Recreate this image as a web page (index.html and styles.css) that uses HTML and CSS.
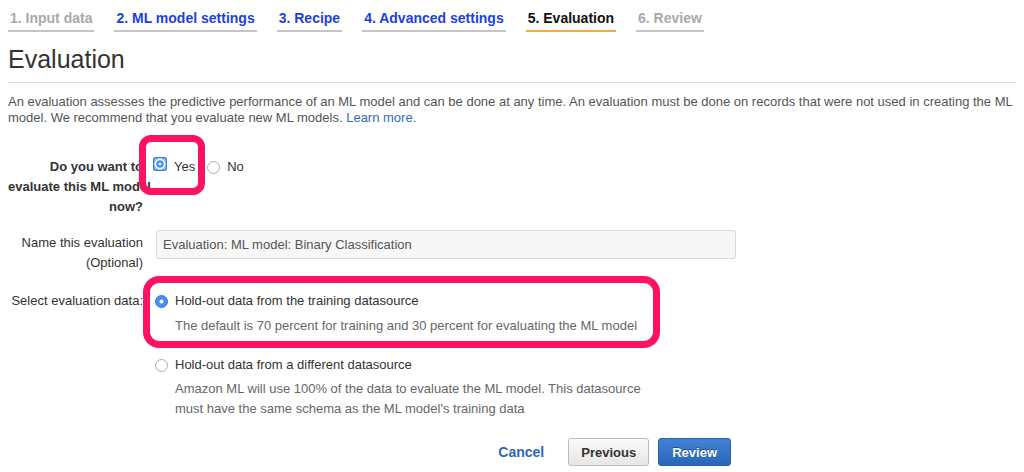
FILE: index.html
```html
<!DOCTYPE html>
<html lang="en">
<head>
<meta charset="utf-8">
<title>Evaluation</title>
<link rel="stylesheet" href="styles.css">
</head>
<body>
<div class="page">
  <nav class="steps">
    <span class="step step-muted">1. Input data</span>
    <span class="step step-link">2. ML model settings</span>
    <span class="step step-link">3. Recipe</span>
    <span class="step step-link">4. Advanced settings</span>
    <span class="step step-active">5. Evaluation</span>
    <span class="step step-muted">6. Review</span>
  </nav>

  <h1 class="title">Evaluation</h1>
  <div class="rule"></div>

  <p class="intro">An evaluation assesses the predictive performance of an ML model and can be done at any time. An evaluation must be done on records that were not used in creating the ML model. We recommend that you evaluate new ML models. <a class="link" href="#">Learn more.</a></p>

  <div class="form">
    <div class="row row-first">
      <div class="label label-bold">Do you want to<br>evaluate this ML model<br>now?</div>
      <div class="control">
        <div class="inline-radios">
          <span class="choice">
            <svg class="radio radio-focus" width="14" height="14" viewBox="0 0 14 14"><rect x="0.5" y="0.5" width="13" height="13" rx="1.5" fill="#78aef0" stroke="#3f80d8"/><circle cx="7" cy="7" r="4.6" fill="#4a8fe6" stroke="#ffffff" stroke-width="1.6"/><circle cx="7" cy="7" r="1.6" fill="#d9e9fb"/></svg>
            <span class="choice-text">Yes</span>
          </span>
          <span class="choice">
            <svg class="radio" width="13" height="13" viewBox="0 0 13 13"><circle cx="6.5" cy="6.5" r="6" fill="#ffffff" stroke="#ababab"/></svg>
            <span class="choice-text">No</span>
          </span>
        </div>
      </div>
    </div>

    <div class="row row-name">
      <div class="label label-padded">Name this evaluation<br>(Optional)</div>
      <div class="control">
        <input class="text-input" type="text" value="Evaluation: ML model: Binary Classification">
      </div>
    </div>

    <div class="row row-data">
      <div class="label">Select evaluation data:</div>
      <div class="control">
        <div class="option">
          <svg class="radio option-radio" width="13" height="13" viewBox="0 0 13 13"><circle cx="6.5" cy="6.5" r="6" fill="#4891f1" stroke="#3479dc"/><circle cx="6.5" cy="6.5" r="2" fill="#ffffff"/></svg>
          <div class="option-body">
            <div class="option-title">Hold-out data from the training datasource</div>
            <div class="option-desc">The default is 70 percent for training and 30 percent for evaluating the ML model</div>
          </div>
        </div>
        <div class="option option-second">
          <svg class="radio option-radio" width="13" height="13" viewBox="0 0 13 13"><circle cx="6.5" cy="6.5" r="6" fill="#ffffff" stroke="#ababab"/></svg>
          <div class="option-body">
            <div class="option-title">Hold-out data from a different datasource</div>
            <div class="option-desc option-desc-tight">Amazon ML will use 100% of the data to evaluate the ML model. This datasource must have the same schema as the ML model's training data</div>
          </div>
        </div>
      </div>
    </div>

    <div class="row row-actions">
      <div class="label"></div>
      <div class="control actions">
        <a class="cancel" href="#">Cancel</a>
        <button class="btn btn-secondary" type="button">Previous</button>
        <button class="btn btn-primary" type="button">Review</button>
      </div>
    </div>
  </div>

  <div class="annot annot-yes"></div>
  <div class="annot annot-data"></div>
</div>
</body>
</html>
```

FILE: styles.css
```css
html, body {
  margin: 0;
  padding: 0;
  background: #ffffff;
}

body {
  font-family: "Liberation Sans", Arial, Helvetica, sans-serif;
  color: #333333;
  font-size: 13px;
}

.page {
  position: relative;
  padding: 10px 8px 0 8px;
}

/* Steps */
.steps {
  display: flex;
  gap: 20px;
}

.step {
  font-size: 14px;
  font-weight: bold;
  line-height: 17px;
  padding: 0 2px 3px 2px;
  border-bottom: 2px solid #c4c4c4;
}

.step-muted { color: #a9a9a9; }
.step-link { color: #1d3fe3; }
.step-active {
  color: #111111;
  border-bottom-color: #f5a84a;
}

/* Heading */
.title {
  margin: 12px 0 0 0;
  font-size: 25px;
  font-weight: normal;
  line-height: 30px;
  color: #333333;
}

.rule {
  height: 1px;
  background: #dddddd;
  margin-top: 8px;
}

.intro {
  margin: 11px 0 0 0;
  font-size: 13px;
  line-height: 16px;
  color: #555555;
}

.link {
  color: #2b6ec4;
  text-decoration: none;
}

/* Form */
.form {
  margin-top: 31px;
}

.row {
  display: grid;
  grid-template-columns: 135px 1fr;
  column-gap: 12px;
}

.row-name { margin-top: 13px; }
.row-data { margin-top: 18px; }
.row-actions { margin-top: 19px; }

.label {
  text-align: right;
  line-height: 20px;
  color: #333333;
}

.label-bold {
  font-weight: bold;
  white-space: nowrap;
  color: #333333;
}

.label-padded {
  padding-top: 3px;
}

.control {
  line-height: 20px;
}

.inline-radios {
  display: flex;
  align-items: center;
  height: 20px;
}

.choice {
  display: inline-flex;
  align-items: center;
  margin-right: 12px;
}

.radio {
  display: block;
  flex: none;
}

.radio-focus {
  margin-left: -2px;
  margin-top: -6px;
}

.choice-text {
  margin-left: 7px;
  color: #333333;
}

.text-input {
  display: block;
  box-sizing: border-box;
  width: 580px;
  height: 29px;
  margin: 0 0 0 1px;
  padding: 0 6px;
  border: 1px solid #d8d8d8;
  border-radius: 3px;
  background: #f7f7f7;
  font-family: "Liberation Sans", Arial, Helvetica, sans-serif;
  font-size: 13px;
  color: #555555;
  outline: none;
}

.option {
  display: flex;
  align-items: flex-start;
}

.option-second {
  margin-top: 19px;
}

.option-radio {
  margin-top: 4px;
}

.option-body {
  margin-left: 7px;
  max-width: 490px;
}

.option-title {
  color: #333333;
}

.option-desc {
  margin-top: 5px;
  color: #666666;
}

.option-desc-tight {
  margin-top: 4px;
}

/* Actions */
.actions {
  width: 576px;
  display: flex;
  justify-content: flex-end;
  align-items: center;
}

.cancel {
  font-size: 14px;
  font-weight: bold;
  color: #2c68b8;
  text-decoration: none;
  margin-right: 24px;
}

.btn {
  box-sizing: border-box;
  height: 28px;
  padding: 0 12px;
  border-radius: 3px;
  font-family: "Liberation Sans", Arial, Helvetica, sans-serif;
  font-size: 13px;
  font-weight: bold;
  cursor: pointer;
}

.btn-secondary {
  color: #333333;
  border: 1px solid #bcbcbc;
  background: linear-gradient(#fbfbfb, #e6e6e6);
}

.btn-primary {
  margin-left: 9px;
  padding: 0 13px;
  color: #ffffff;
  border: 1px solid #2a5fa9;
  background: linear-gradient(#4282d4, #2a65b9);
  text-shadow: 0 -1px 0 rgba(0, 0, 0, 0.35);
}

/* Annotation overlays */
.annot {
  position: absolute;
  box-sizing: border-box;
  border: 7px solid #fd1162;
  pointer-events: none;
}

.annot-yes {
  left: 139px;
  top: 135px;
  width: 66px;
  height: 60px;
  border-radius: 12px;
}

.annot-data {
  left: 143px;
  top: 276px;
  width: 517px;
  height: 72px;
  border-radius: 16px;
}
```
